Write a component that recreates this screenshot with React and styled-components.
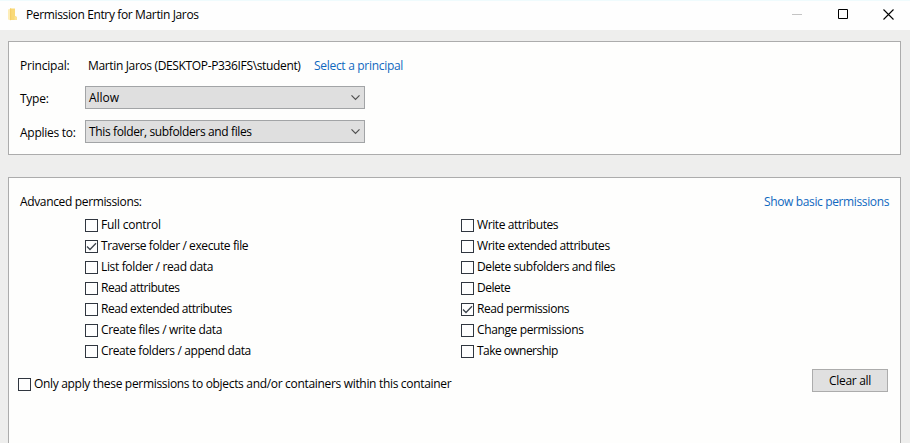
import React from "react";
import styled, { createGlobalStyle } from "styled-components";

const GlobalStyle = createGlobalStyle`
  * { box-sizing: border-box; }
  body {
    margin: 0;
    overflow: hidden;
    background: #eeeeed;
    color: #000;
    font-family: "Open Sans", "Noto Sans", sans-serif;
    font-size: 12px;
    line-height: 16px;
  }
`;

const Window = styled.div`
  height: 443px;
  overflow: hidden;
  display: flex;
  flex-direction: column;
`;

const TitleBar = styled.header`
  flex: none;
  height: 30px;
  padding: 0 16px 2px 8px;
  display: flex;
  align-items: center;
  background: #fefefe;
  border-top: 1px solid #effbfd;
`;

const Text = styled.span`
  white-space: pre;
  letter-spacing: ${(p) => p.$track || 0}px;
`;

const Title = styled(Text)`
  margin-left: 8px;
  padding-top: 1px;
  flex: 1;
`;

const Controls = styled.div`
  display: flex;
  align-items: center;
  gap: 35px;
`;

const Panel = styled.section`
  flex: none;
  margin: ${(p) => p.$top}px 9px 0 8px;
  height: ${(p) => p.$height}px;
  padding: ${(p) => p.$pad}px 11px 0;
  border: 1px solid #acacac;
  background: #fefefd;
`;

const Field = styled.div`
  display: flex;
  align-items: center;
  height: ${(p) => p.$height || 23}px;
  margin-top: ${(p) => p.$gap || 0}px;
`;

const FieldLabel = styled(Text)`
  width: 65px;
  flex: none;
  padding-top: ${(p) => p.$drop || 0}px;
`;

const Link = styled.a`
  color: #1068bf;
  white-space: pre;
  letter-spacing: ${(p) => p.$track || 0}px;
`;

const Principal = styled(Text)`
  margin-left: 3px;
  width: 226px;
`;

const Select = styled.div`
  width: 280px;
  height: 23px;
  padding: 0 4px 0 3px;
  display: flex;
  align-items: center;
  justify-content: space-between;
  border: 1px solid #a2a4a6;
  background: #dfdfdf;
`;

const Heading = styled.div`
  display: flex;
  justify-content: space-between;
`;

const Permissions = styled.div`
  display: grid;
  grid-template-columns: 376px 1fr;
  margin: 4px 0 0 65px;
`;

const CheckRow = styled.label`
  display: flex;
  align-items: center;
  height: 21px;
`;

const Box = styled.span`
  width: 13px;
  height: 13px;
  flex: none;
  margin: 1px 3px 0 0;
  display: flex;
  border: 1px solid #30363f;
  background: #fefefe;
`;

const Footer = styled.div`
  display: flex;
  align-items: flex-start;
  justify-content: space-between;
  margin: 8px 1px 0 -2px;
`;

const OnlyApply = styled(CheckRow)`
  margin-top: 4px;
`;

const Button = styled.button`
  width: 76px;
  height: 23px;
  padding: 0;
  border: 1px solid #acacac;
  background: #e0e0e0;
  color: inherit;
  font: inherit;
  letter-spacing: -0.3px;
`;

const Chevron = () => (
  <svg width="9" height="7" viewBox="0 0 9 7" fill="none" stroke="#505050" strokeWidth="1.2">
    <path d="M.5 1.3 4.5 5.3 8.5 1.3" />
  </svg>
);

const Check = ({ label, checked, track, as: Row = CheckRow }) => (
  <Row>
    <Box>
      {checked && (
        <svg width="11" height="11" viewBox="0 0 11 11" fill="none" stroke="#3c434c" strokeWidth="1.3">
          <path d="M1 5.5 4 8.5 10 2.3" />
        </svg>
      )}
    </Box>
    <Text $track={track}>{label}</Text>
  </Row>
);

const left = [
  ["Full control", -0.22],
  ["Traverse folder / execute file", -0.4, true],
  ["List folder / read data", -0.35],
  ["Read attributes", -0.5],
  ["Read extended attributes", -0.46],
  ["Create files / write data", -0.34],
  ["Create folders / append data", -0.38],
];

const right = [
  ["Write attributes", -0.41],
  ["Write extended attributes", -0.44],
  ["Delete subfolders and files", -0.4],
  ["Delete", -0.5],
  ["Read permissions", -0.44, true],
  ["Change permissions", -0.37],
  ["Take ownership", -0.55],
];

export default function App() {
  return (
    <Window>
      <GlobalStyle />
      <TitleBar>
        <svg width="10" height="13" viewBox="0 0 10 13">
          <path d="M0 1.5 3 .5v12L0 11.5z" fill="#fdedb8" />
          <path d="M2 .5h5v7.5l2 1v3H2z" fill="#f9d978" />
          <path d="M2 .5h1.2v11.5H2z" fill="#f5cf68" />
          <path d="M6.5 8.5 9 9v3H6.5z" fill="#fbe294" />
        </svg>
        <Title $track={-0.365}>Permission Entry for Martin Jaros</Title>
        <Controls>
          <svg width="10" height="11" viewBox="0 0 10 11">
            <path d="M0 5h10v1H0z" fill="#c4c4c4" />
          </svg>
          <svg width="11" height="11" viewBox="0 0 11 11" fill="none" stroke="#000">
            <path d="M1.5 .5h9v9h-9z" />
          </svg>
          <svg width="11" height="11" viewBox="0 0 11 11" fill="none" stroke="#000" strokeWidth="1.1">
            <path d="M.5 .5 10.5 10.5M10.5 .5 .5 10.5" />
          </svg>
        </Controls>
      </TitleBar>
      <Panel $top={11} $height={114} $pad={15}>
        <Field $height={18}>
          <FieldLabel $track={-0.2}>Principal:</FieldLabel>
          <Principal $track={-0.35}>Martin Jaros (DESKTOP-P336IFS\student)</Principal>
          <Link $track={-0.3}>Select a principal</Link>
        </Field>
        <Field $gap={11}>
          <FieldLabel $drop={2} $track={-0.25}>Type:</FieldLabel>
          <Select>
            <Text $track={-0.05}>Allow</Text>
            <Chevron />
          </Select>
        </Field>
        <Field $gap={11}>
          <FieldLabel $drop={2} $track={-0.27}>Applies to:</FieldLabel>
          <Select>
            <Text $track={-0.37}>This folder, subfolders and files</Text>
            <Chevron />
          </Select>
        </Field>
      </Panel>
      <Panel $top={22} $height={290} $pad={16}>
        <Heading>
          <Text $track={-0.35}>Advanced permissions:</Text>
          <Link $track={-0.37}>Show basic permissions</Link>
        </Heading>
        <Permissions>
          {[left, right].map((column, i) => (
            <div key={i}>
              {column.map(([label, track, checked]) => (
                <Check key={label} label={label} track={track} checked={checked} />
              ))}
            </div>
          ))}
        </Permissions>
        <Footer>
          <Check
            as={OnlyApply}
            track={-0.32}
            label="Only apply these permissions to objects and/or containers within this container"
          />
          <Button>Clear all</Button>
        </Footer>
      </Panel>
    </Window>
  );
}
